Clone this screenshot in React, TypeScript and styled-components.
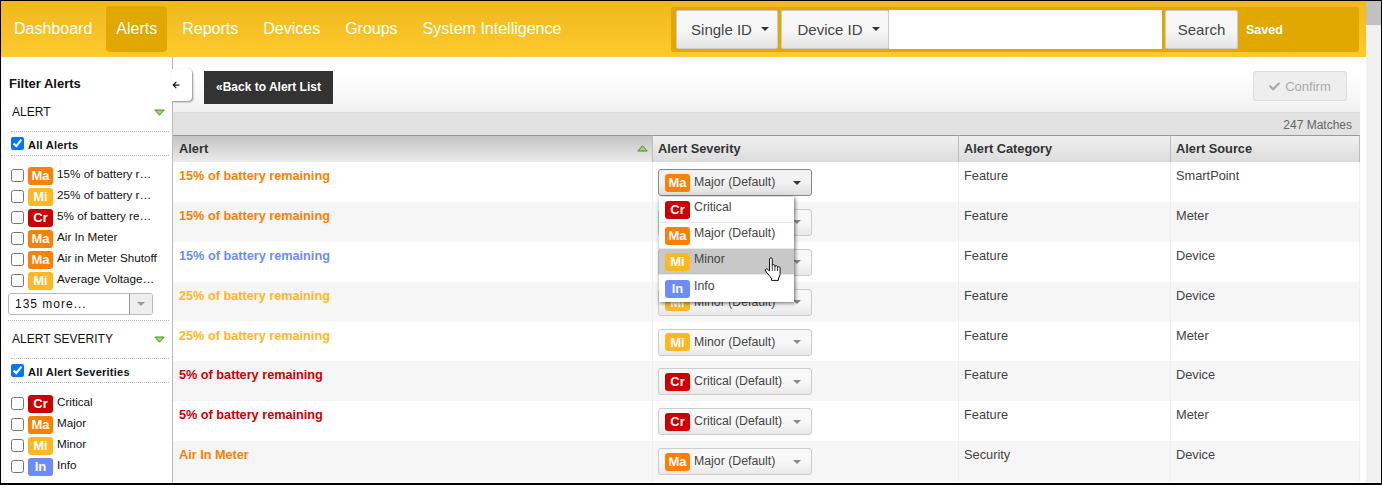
import React from 'react'
import styled, { createGlobalStyle } from 'styled-components'
import { FaArrowLeft, FaCheck } from 'react-icons/fa'

type Level = 'Cr' | 'Ma' | 'Mi' | 'In'

const levelColors: Record<Level, string> = {
  Cr: '#cc0000',
  Ma: '#ff7f00',
  Mi: '#ffb822',
  In: '#6d8cf9',
}

const GlobalStyle = createGlobalStyle`
  html, body {
    margin: 0;
    padding: 0;
    overflow: hidden;
    background: #fff;
  }
  * {
    box-sizing: border-box;
  }
`

const Frame = styled.div`
  width: 1382px;
  height: 485px;
  display: flex;
  overflow: hidden;
  border-style: solid;
  border-color: #000;
  border-width: 1px 1px 2px 1px;
  font-family: "Liberation Sans", Arial, sans-serif;
  color: #333;
`

const Page = styled.div`
  flex: 1;
  min-width: 0;
  display: flex;
  flex-direction: column;
`

const ScrollTrack = styled.div`
  width: 15px;
  background: #f1f1f1;
`

const ScrollThumb = styled.div`
  height: 24px;
  background: #c1c1c1;
`

const Header = styled.header`
  height: 56px;
  flex: none;
  display: flex;
  align-items: center;
  justify-content: space-between;
  padding: 0 7px 0 3px;
  background: linear-gradient(#f0b81c, #fdca2e);
`

const Nav = styled.nav`
  display: flex;
  gap: 5px;
  margin-left: -1px;
`

const NavLink = styled.a<{ $active?: boolean }>`
  height: 46px;
  padding: 0 10px;
  display: flex;
  align-items: center;
  font-size: 16px;
  color: #fff;
  border-radius: 4px;
  background: ${(p) => (p.$active ? '#e0a800' : 'transparent')};

  &:first-child {
    padding: 0 9px 0 11px;
  }
`

const SearchPanel = styled.div`
  width: 688px;
  height: 45px;
  display: flex;
  align-items: center;
  padding: 0 4px 0 5px;
  background: #e0a800;
  border-radius: 2px;
`

const SearchButton = styled.button<{ $width: number; $gap?: number; $shift?: number }>`
  width: ${(p) => p.$width}px;
  height: 39px;
  margin-right: ${(p) => p.$gap ?? 0}px;
  display: flex;
  align-items: center;
  justify-content: center;
  gap: 9px;
  padding: 0 0 0 ${(p) => p.$shift ?? 0}px;
  font-family: inherit;
  font-size: 15px;
  color: #444;
  border: 1px solid #ccc;
  border-radius: 2px;
  background: linear-gradient(#f6f6f6 55%, #e4e4e4);
`

const Caret = styled.span<{ $color?: string; $size?: number }>`
  display: inline-block;
  width: 0;
  height: 0;
  border-style: solid;
  border-width: ${(p) => p.$size ?? 4}px ${(p) => p.$size ?? 4}px 0;
  border-color: ${(p) => p.$color ?? '#333'} transparent transparent;
`

const SearchInput = styled.input`
  width: 273px;
  height: 39px;
  margin-right: 3px;
  border: 0;
  background: #fff;
`

const SavedText = styled.span`
  margin: 2px 0 0 8px;
  font-size: 12.5px;
  font-weight: bold;
  color: #fff;
`

const Body = styled.div`
  flex: 1;
  min-height: 0;
  display: flex;
`

const Sidebar = styled.aside`
  width: 172px;
  flex: none;
  padding-top: 18px;
  background: #fff;
  border-right: 1px solid #bbb;
  color: #111;
  overflow: hidden;
`

const SidebarTitle = styled.div`
  height: 17px;
  padding-left: 8px;
  font-size: 13px;
  font-weight: bold;
  line-height: 17px;
`

const FilterHeading = styled.div<{ $top: number }>`
  height: 20px;
  margin: ${(p) => p.$top}px 7px 0 11px;
  display: flex;
  align-items: center;
  justify-content: space-between;
  font-size: 12px;
`

const AllRow = styled.label`
  height: 25px;
  margin: 9px 3px 0 10px;
  display: flex;
  align-items: center;
  gap: 4px;
  font-size: 11px;
  font-weight: bold;
  letter-spacing: 0.25px;
  border-top: 1px dotted #bbb;
  border-bottom: 1px dotted #bbb;

  span {
    margin-top: 3px;
  }
`

const CheckList = styled.ul<{ $top: number }>`
  list-style: none;
  margin: ${(p) => p.$top}px 0 0;
  padding: 0 0 0 10px;
`

const CheckItem = styled.li`
  height: 21px;
  display: flex;
  align-items: center;
`

const Check = styled.input`
  width: 13px;
  height: 13px;
  margin: 0;
  flex: none;
`

const Badge = styled.span<{ $level: Level }>`
  width: 25px;
  height: 18px;
  flex: none;
  display: inline-flex;
  align-items: center;
  justify-content: center;
  font-size: 13px;
  font-weight: bold;
  color: #fff;
  border-radius: 3px;
  background: ${(p) => levelColors[p.$level]};
`

const CheckBadge = styled(Badge)`
  margin: 0 4px;
`

const CheckLabel = styled.span`
  margin-top: -4px;
  font-size: 11.7px;
  white-space: nowrap;
`

const MoreSelect = styled.div`
  width: 145px;
  height: 22px;
  margin: 2px 0 0 7px;
  display: flex;
  border: 1px solid #bbb;
  border-radius: 3px;
  overflow: hidden;
`

const MoreText = styled.div`
  flex: 1;
  padding-left: 6px;
  font-size: 12px;
  line-height: 20px;
  letter-spacing: 1px;
  border-right: 1px solid #999;
`

const MoreArrow = styled.div`
  width: 22px;
  display: flex;
  align-items: center;
  justify-content: center;
  background: #eee;
`

const Rule = styled.div`
  margin: 5px 3px 0 7px;
  border-top: 1px dotted #bbb;
`

const Main = styled.main`
  position: relative;
  flex: 1;
  min-width: 0;
  padding-right: 6px;
`

const CollapseTab = styled.button`
  position: absolute;
  left: -1px;
  top: 12px;
  width: 20px;
  height: 32px;
  padding: 0;
  display: flex;
  align-items: center;
  color: #111;
  font-size: 8px;
  background: #fff;
  border: 0;
  border-radius: 0 4px 4px 0;
  box-shadow: 1px 1px 2px rgba(0, 0, 0, 0.45);
`

const Toolbar = styled.div`
  height: 56px;
  display: flex;
  align-items: flex-start;
  justify-content: space-between;
  padding: 14px 13px 0 31px;
  background: linear-gradient(#fff 30%, #f2f2f2);
  border-bottom: 1px solid #ddd;
`

const BackButton = styled.button`
  height: 33px;
  width: 129px;
  padding: 0 0 2px;
  font-family: inherit;
  font-size: 12px;
  font-weight: bold;
  color: #fff;
  background: #333;
  border: 0;
`

const ConfirmButton = styled.button`
  height: 30px;
  width: 94px;
  padding: 1px 0 0;
  display: flex;
  align-items: center;
  justify-content: center;
  gap: 5px;
  font-family: inherit;
  font-size: 13px;
  color: #aaa;
  background: #eee;
  border: 1px solid #ddd;
  border-radius: 3px;
`

const MatchBar = styled.div`
  height: 22px;
  padding-right: 8px;
  font-size: 12px;
  line-height: 25px;
  text-align: right;
  color: #666;
  background: #e2e2e2;
`

const columns = '480px 306px 212px 189px'

const HeadRow = styled.div`
  display: grid;
  grid-template-columns: ${columns};
  height: 27px;
`

const HeadCell = styled.div<{ $sorted?: boolean }>`
  display: flex;
  align-items: center;
  justify-content: space-between;
  padding: 0 4px 2px ${(p) => (p.$sorted ? 6 : 5)}px;
  font-size: 12.8px;
  font-weight: bold;
  color: #333;
  border-top: 1px solid #999;
  border-right: 1px solid #bbb;
  background: ${(p) =>
    p.$sorted
      ? 'linear-gradient(#c4c4c4, #ebebeb)'
      : 'linear-gradient(#f0f0f0, #dcdcdc)'};
`

const Row = styled.div<{ $alt: boolean }>`
  display: grid;
  grid-template-columns: ${columns};
  height: 39.875px;
  background: ${(p) => (p.$alt ? '#f6f6f6' : '#fff')};
`

const Cell = styled.div`
  padding: 6px 5px 0;
  font-size: 12.8px;
  line-height: 15px;
  color: #444;
  border-right: 1px solid #efefef;
`

const NameCell = styled(Cell)<{ $color: string }>`
  padding: 7px 5px 0 6px;
  font-size: 12.7px;
  font-weight: bold;
  color: ${(p) => p.$color};
`

const ControlCell = styled(Cell)`
  padding-top: 7px;
`

const SeverityButton = styled.div<{ $open?: boolean }>`
  width: 154px;
  height: 27px;
  display: flex;
  align-items: center;
  padding: 0 10px 0 6px;
  font-size: 12.3px;
  color: #444;
  border: 1px solid ${(p) => (p.$open ? '#888' : '#ccc')};
  border-radius: 3px;
  background: ${(p) =>
    p.$open
      ? 'linear-gradient(#f2f2f2 50%, #dedede)'
      : 'linear-gradient(#f8f8f8 50%, #e8e8e8)'};
`

const SeverityText = styled.span`
  flex: 1;
  margin-left: 4px;
`

const Menu = styled.ul`
  position: absolute;
  left: 486px;
  top: 140px;
  width: 135px;
  height: 105px;
  margin: 0;
  padding: 0;
  list-style: none;
  background: #fff;
  box-shadow: 1px 1px 4px rgba(0, 0, 0, 0.6);
`

const MenuOption = styled.li<{ $hover?: boolean }>`
  height: 26px;
  display: flex;
  align-items: center;
  gap: 4px;
  padding-left: 6px;
  font-size: 12.3px;
  color: #444;
  border-bottom: 1px solid #e8e8e8;
  background: ${(p) => (p.$hover ? '#c8c8c8' : '#fff')};

  span:last-child {
    margin-top: -5px;
  }

  &:last-child {
    height: 27px;
    border-bottom: 0;
  }
`

const HandCursor = styled.svg`
  position: absolute;
  left: 591px;
  top: 200px;
`

const Triangle = ({ up }: { up?: boolean }) => (
  <svg width="11" height="7" viewBox="0 0 11 7">
    <path
      d={up ? 'M5.5 .8 10.2 6H.8Z' : 'M.8 1H10.2L5.5 6.2Z'}
      fill="#a5d46a"
      stroke="#4e8a1c"
    />
  </svg>
)

const alertFilters: [Level, string][] = [
  ['Ma', '15% of battery r…'],
  ['Mi', '25% of battery r…'],
  ['Cr', '5% of battery re…'],
  ['Ma', 'Air In Meter'],
  ['Ma', 'Air in Meter Shutoff'],
  ['Mi', 'Average Voltage…'],
]

const severityFilters: [Level, string][] = [
  ['Cr', 'Critical'],
  ['Ma', 'Major'],
  ['Mi', 'Minor'],
  ['In', 'Info'],
]

const menuOptions: [Level, string][] = [
  ['Cr', 'Critical'],
  ['Ma', 'Major (Default)'],
  ['Mi', 'Minor'],
  ['In', 'Info'],
]

const rows: { name: string; level: Level; severity: string; category: string; source: string }[] = [
  { name: '15% of battery remaining', level: 'Ma', severity: 'Major (Default)', category: 'Feature', source: 'SmartPoint' },
  { name: '15% of battery remaining', level: 'Ma', severity: 'Major (Default)', category: 'Feature', source: 'Meter' },
  { name: '15% of battery remaining', level: 'In', severity: 'Info (Default)', category: 'Feature', source: 'Device' },
  { name: '25% of battery remaining', level: 'Mi', severity: 'Minor (Default)', category: 'Feature', source: 'Device' },
  { name: '25% of battery remaining', level: 'Mi', severity: 'Minor (Default)', category: 'Feature', source: 'Meter' },
  { name: '5% of battery remaining', level: 'Cr', severity: 'Critical (Default)', category: 'Feature', source: 'Device' },
  { name: '5% of battery remaining', level: 'Cr', severity: 'Critical (Default)', category: 'Feature', source: 'Meter' },
  { name: 'Air In Meter', level: 'Ma', severity: 'Major (Default)', category: 'Security', source: 'Device' },
]

export default function App() {
  return (
    <Frame>
      <GlobalStyle />
      <Page>
        <Header>
          <Nav>
            <NavLink>Dashboard</NavLink>
            <NavLink $active>Alerts</NavLink>
            <NavLink>Reports</NavLink>
            <NavLink>Devices</NavLink>
            <NavLink>Groups</NavLink>
            <NavLink>System Intelligence</NavLink>
          </Nav>
          <SearchPanel>
            <SearchButton $width={102} $gap={3} $shift={6}>
              Single ID <Caret />
            </SearchButton>
            <SearchButton $width={108} $shift={7}>
              Device ID <Caret />
            </SearchButton>
            <SearchInput />
            <SearchButton $width={73}>Search</SearchButton>
            <SavedText>Saved</SavedText>
          </SearchPanel>
        </Header>
        <Body>
          <Sidebar>
            <SidebarTitle>Filter Alerts</SidebarTitle>
            <FilterHeading $top={10}>
              ALERT <Triangle />
            </FilterHeading>
            <AllRow>
              <Check type="checkbox" defaultChecked />
              <span>All Alerts</span>
            </AllRow>
            <CheckList $top={9}>
              {alertFilters.map(([level, label]) => (
                <CheckItem key={label}>
                  <Check type="checkbox" />
                  <CheckBadge $level={level}>{level}</CheckBadge>
                  <CheckLabel>{label}</CheckLabel>
                </CheckItem>
              ))}
            </CheckList>
            <MoreSelect>
              <MoreText>135 more...</MoreText>
              <MoreArrow>
                <Caret $color="#999" />
              </MoreArrow>
            </MoreSelect>
            <Rule />
            <FilterHeading $top={8}>
              ALERT SEVERITY <Triangle />
            </FilterHeading>
            <AllRow>
              <Check type="checkbox" defaultChecked />
              <span>All Alert Severities</span>
            </AllRow>
            <CheckList $top={10}>
              {severityFilters.map(([level, label]) => (
                <CheckItem key={label}>
                  <Check type="checkbox" />
                  <CheckBadge $level={level}>{level}</CheckBadge>
                  <CheckLabel>{label}</CheckLabel>
                </CheckItem>
              ))}
            </CheckList>
          </Sidebar>
          <Main>
            <Toolbar>
              <BackButton>«Back to Alert List</BackButton>
              <ConfirmButton>
                <FaCheck size={11} color="#aaa" /> Confirm
              </ConfirmButton>
            </Toolbar>
            <MatchBar>247 Matches</MatchBar>
            <HeadRow>
              <HeadCell $sorted>
                Alert <Triangle up />
              </HeadCell>
              <HeadCell>Alert Severity</HeadCell>
              <HeadCell>Alert Category</HeadCell>
              <HeadCell>Alert Source</HeadCell>
            </HeadRow>
            {rows.map((row, i) => (
              <Row key={i} $alt={i % 2 === 1}>
                <NameCell $color={levelColors[row.level]}>{row.name}</NameCell>
                <ControlCell>
                  <SeverityButton $open={i === 0}>
                    <Badge $level={row.level}>{row.level}</Badge>
                    <SeverityText>{row.severity}</SeverityText>
                    <Caret $color={i === 0 ? '#333' : '#888'} />
                  </SeverityButton>
                </ControlCell>
                <Cell>{row.category}</Cell>
                <Cell>{row.source}</Cell>
              </Row>
            ))}
            <Row $alt={false}>
              <Cell />
              <Cell />
              <Cell />
              <Cell />
            </Row>
            <Menu>
              {menuOptions.map(([level, label]) => (
                <MenuOption key={level} $hover={level === 'Mi'}>
                  <Badge $level={level}>{level}</Badge>
                  <span>{label}</span>
                </MenuOption>
              ))}
            </Menu>
            <HandCursor width="19" height="25" viewBox="0 0 19 25">
              <path
                d="M5.5 2c0-1.500 2.800-1.500 2.800 0v6.600c0-1.200 2.600-1.200 2.600 0v1c0-1.200 2.600-1.200 2.600 0v1c0-1.100 2.600-1.100 2.600.2v5.800c0 2-.6 3-1.600 4.400v2.400H7.500v-2C6 19.500 4 17 1.500 14c-1-1.500.8-3 2.300-1.600l1.700 1.700Z"
                fill="#fff"
                stroke="#111"
                strokeWidth="1"
                strokeLinejoin="round"
              />
              <path d="M8.300 8.500v5.500M10.900 9.300v4.700M13.500 10.300v3.700" stroke="#111" strokeWidth=".8" fill="none" />
            </HandCursor>
            <CollapseTab>
              <FaArrowLeft />
            </CollapseTab>
          </Main>
        </Body>
      </Page>
      <ScrollTrack>
        <ScrollThumb />
      </ScrollTrack>
    </Frame>
  )
}
